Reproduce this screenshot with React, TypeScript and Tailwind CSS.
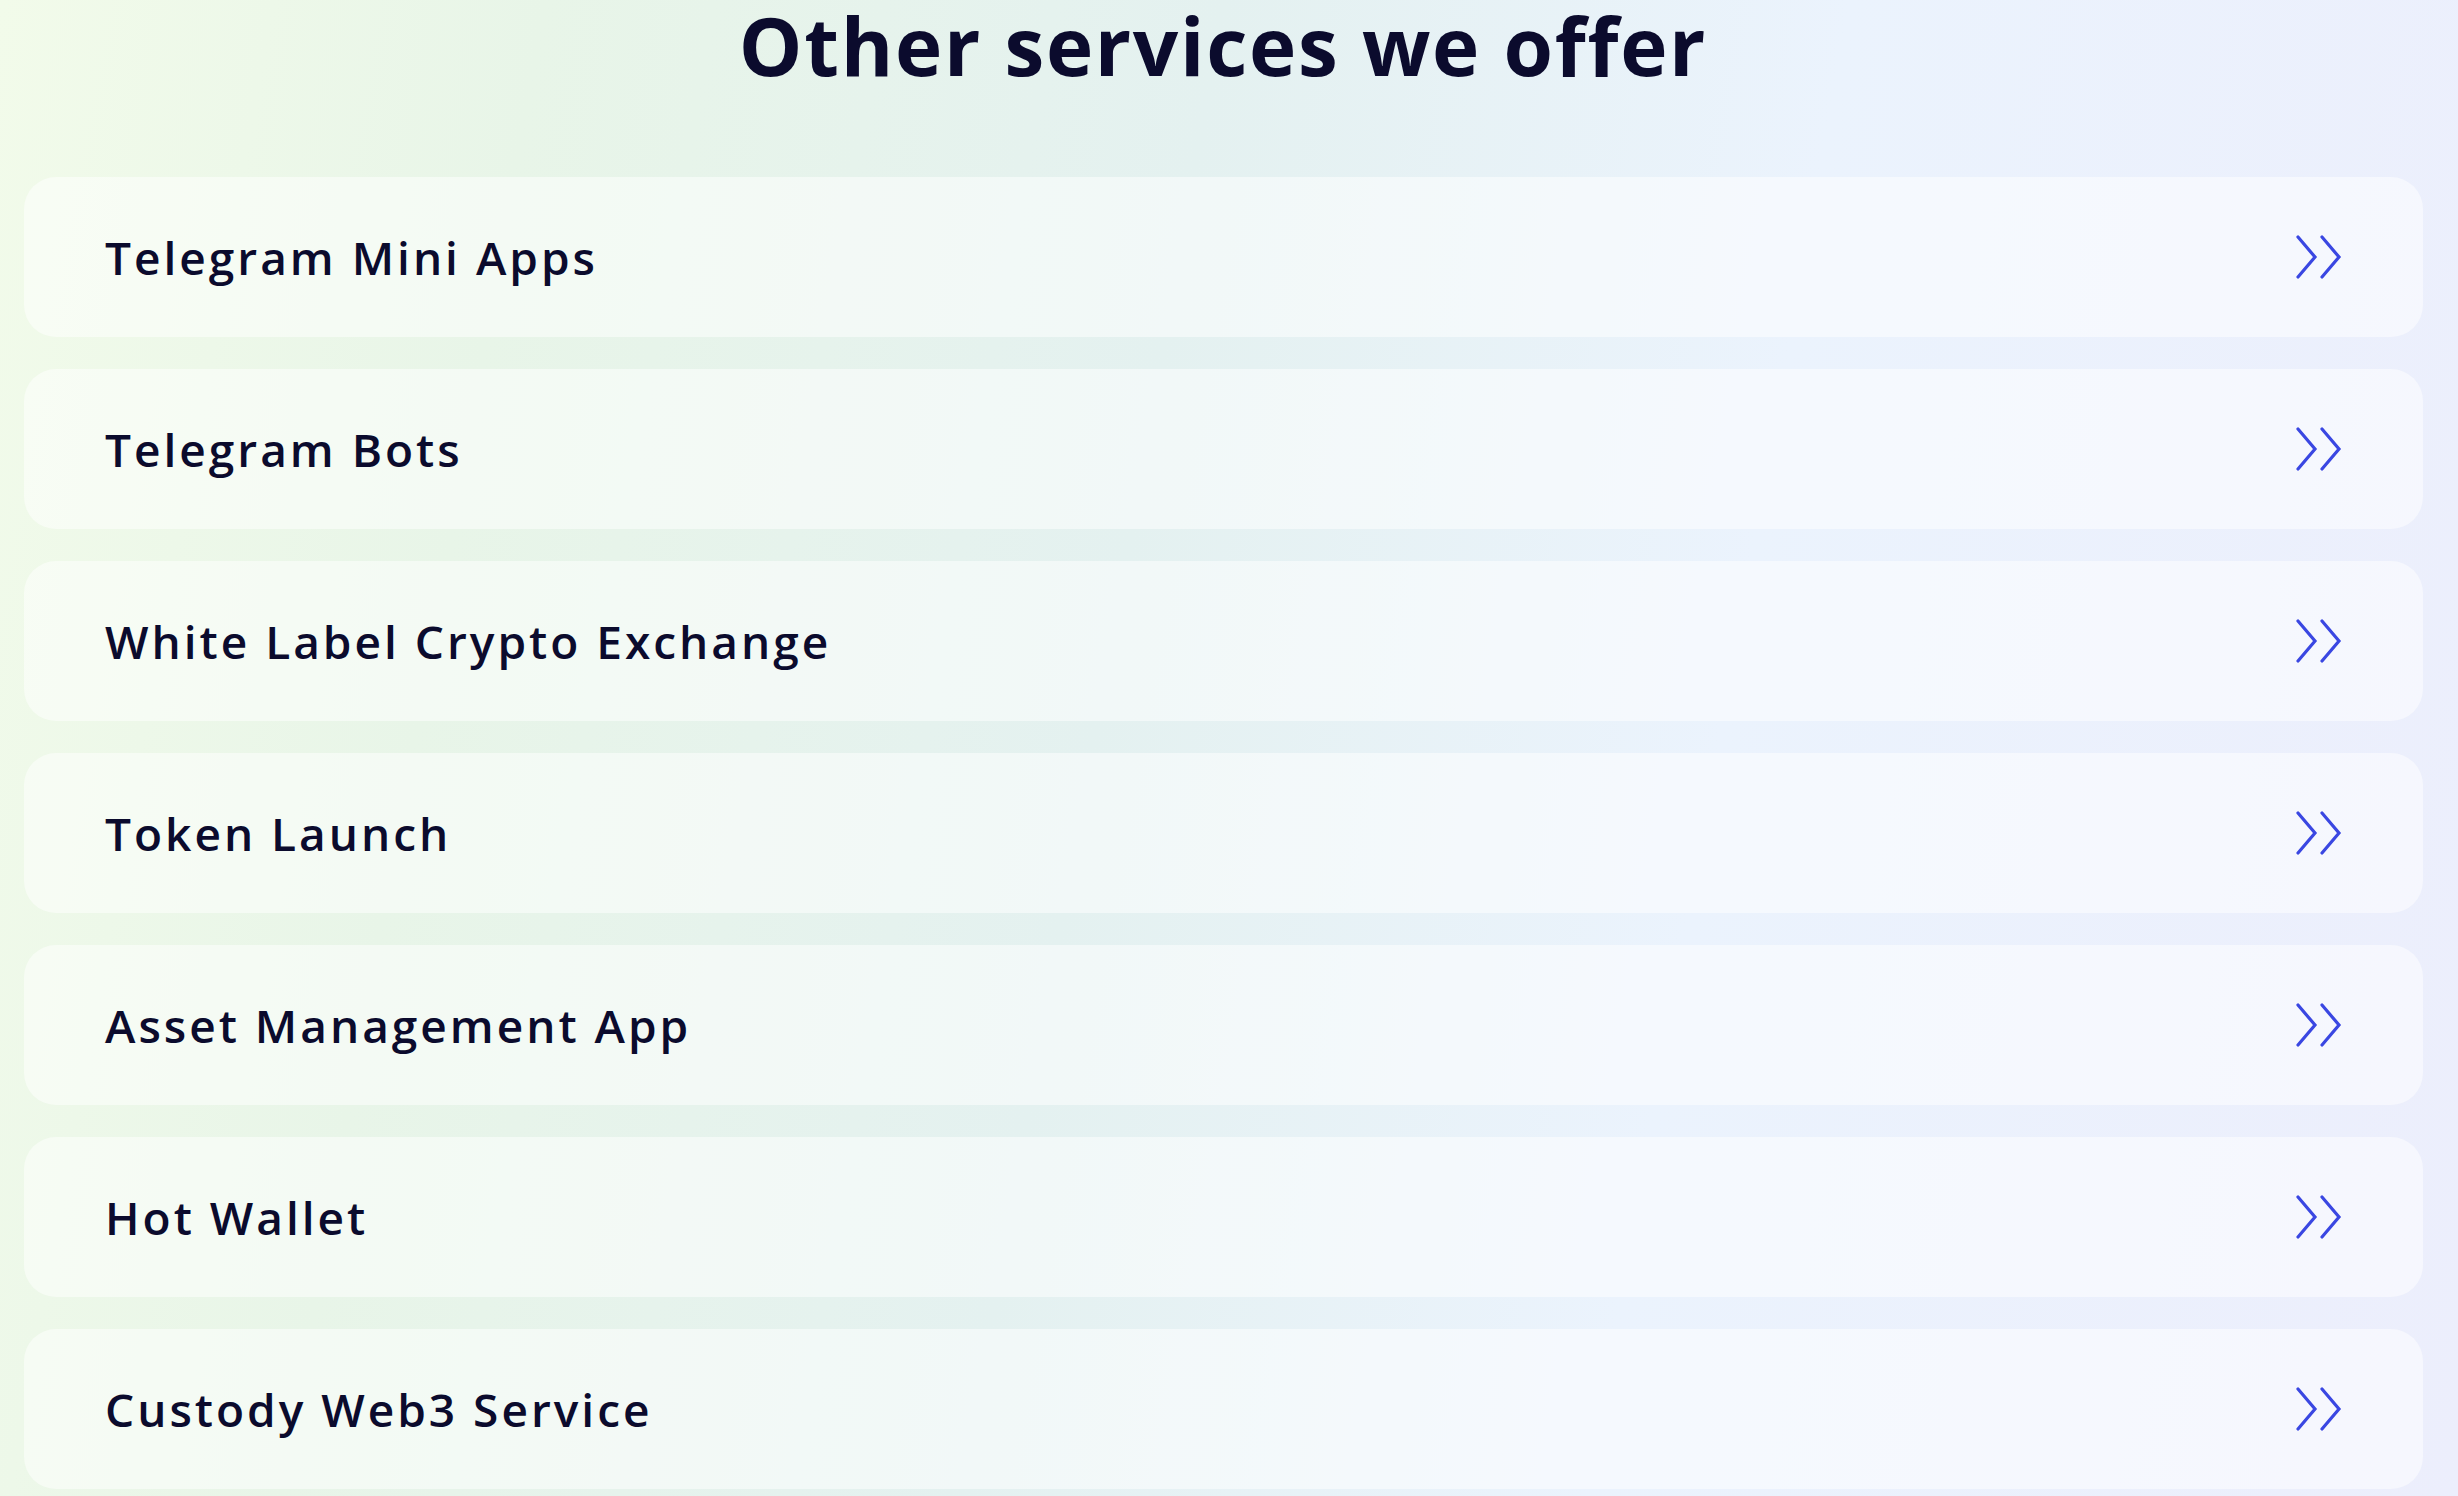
import React from 'react';

const services = [
  'Telegram Mini Apps',
  'Telegram Bots',
  'White Label Crypto Exchange',
  'Token Launch',
  'Asset Management App',
  'Hot Wallet',
  'Custody Web3 Service',
];

function DoubleChevron() {
  return (
    <svg width="48" height="44" viewBox="0 0 48 44" fill="none" className="shrink-0">
      <path d="M3 2 L20 22 L3 42" stroke="#3a47e2" strokeWidth="3.2" strokeLinecap="round" strokeLinejoin="miter" />
      <path d="M27 2 L44 22 L27 42" stroke="#3a47e2" strokeWidth="3.2" strokeLinecap="round" strokeLinejoin="miter" />
    </svg>
  );
}

export default function App() {
  return (
    <div className="min-h-screen w-full bg-[linear-gradient(100deg,#f2fbea_0%,#e8f5e8_20%,#e4f1f0_45%,#ebf3fd_68%,#eceefc_100%)] font-['Open_Sans','Lato',sans-serif] text-[#0b0b2d]">
      {/* Titulo */}
      <h2 className="text-center text-[80px] leading-[90px] font-bold tracking-[1.7px] pr-[12px]">
        Other services we offer
      </h2>

      {/* Lista de servicos */}
      <div className="mt-[87px] flex flex-col gap-[32px] pl-[24px] pr-[35px]">
        {services.map((s) => (
          <div
            key={s}
            className="flex h-[160px] items-center justify-between rounded-[32px] bg-white/50 pl-[81px] pr-[80px]"
          >
            <span className="text-[46px] font-semibold leading-none tracking-[3px]">{s}</span>
            <DoubleChevron />
          </div>
        ))}
      </div>
    </div>
  );
}
